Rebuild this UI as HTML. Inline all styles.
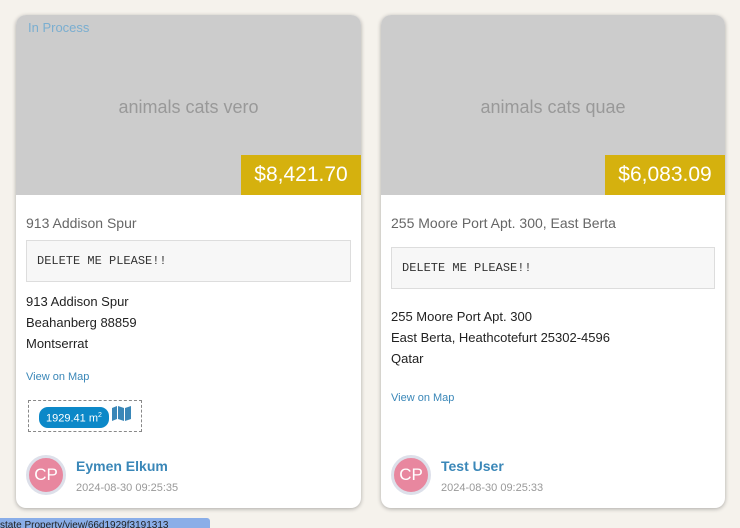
<!DOCTYPE html>
<html><head><style>
body{margin:0;width:740px;height:526px;background:#f5f2ec;font-family:"Liberation Sans",sans-serif;position:relative;overflow:hidden}
.card{position:absolute;top:15px;width:345px;height:493px;background:#fff;border-radius:10px;box-shadow:0 1px 4px rgba(0,0,0,.3);overflow:hidden}
.img{position:absolute;left:0;top:0;width:100%;height:180px;background:#cccccc}
.ph{position:absolute;top:82px;width:100%;text-align:center;color:#999;font-size:18px}
.price{position:absolute;right:0;top:140px;height:40px;width:120px;background:#d5b10e;color:#fff;font-size:21px;line-height:40px;text-align:center}
.st{position:absolute;left:12px;top:5px;color:#7aaed0;font-size:13px}
.t{position:absolute;left:10px;color:#666;font-size:14px}
.pre{position:absolute;left:10px;background:#f7f7f7;border:1px solid #ddd;font-family:"Liberation Mono",monospace;font-size:12px;line-height:40px;padding-left:10px;box-sizing:border-box;width:325px;height:42px;color:#333}
.addr{position:absolute;left:10px;font-size:13px;line-height:21px;color:#222}
.link{position:absolute;left:10px;font-size:11px;color:#3a87b8}
.av{position:absolute;left:10px;top:440px;width:34px;height:34px;border-radius:50%;background:#e8879f;border:3px solid #dde0ea;color:#fff;font-size:17px;line-height:34px;text-align:center}
.nm{position:absolute;left:60px;top:443px;color:#3a87b8;font-size:14px;font-weight:bold}
.dt{position:absolute;left:60px;top:467px;color:#999;font-size:11px}
</style></head><body>
<div class="card" style="left:16px">
<div class="img"><div class="ph">animals cats vero</div><div class="price">$8,421.70</div><div class="st">In Process</div></div>
<div class="t" style="top:200px">913 Addison Spur</div>
<div class="pre" style="top:225px">DELETE ME PLEASE!!</div>
<div class="addr" style="top:276px">913 Addison Spur<br>Beahanberg 88859<br>Montserrat</div>
<div class="link" style="top:356px">View on Map</div>
<div style="position:absolute;left:12px;top:385px;width:114px;height:32px;border:1px dashed #888;box-sizing:border-box">
<span style="position:absolute;left:10px;top:6px;background:#0c88c8;color:#fff;font-size:11px;border-radius:9px;padding:2px 7px;line-height:13px">1929.41 m<sup style="font-size:7px">2</sup></span>
<svg style="position:absolute;left:83px;top:5px" width="19" height="15" viewBox="0 0 19 15"><path d="M0 2l5-2v13l-5 2zM6 0l6 2v13l-6-2zM13 2l6-2v13l-6 2z" fill="#3a87b8"/></svg></div>
<div class="av">CP</div><div class="nm">Eymen Elkum</div><div class="dt">2024-08-30 09:25:35</div>
</div>
<div class="card" style="left:381px;width:344px">
<div class="img"><div class="ph">animals cats quae</div><div class="price">$6,083.09</div></div>
<div class="t" style="top:200px">255 Moore Port Apt. 300, East Berta</div>
<div class="pre" style="top:232px;width:324px">DELETE ME PLEASE!!</div>
<div class="addr" style="top:291px">255 Moore Port Apt. 300<br>East Berta, Heathcotefurt 25302-4596<br>Qatar</div>
<div class="link" style="top:377px">View on Map</div>
<div class="av">CP</div><div class="nm">Test User</div><div class="dt">2024-08-30 09:25:33</div>
</div>
<div style="position:absolute;left:0;top:518px;width:210px;height:10px;background:#8aaee8;border-radius:0 3px 0 0;font-size:10px;line-height:16px;color:#222;overflow:hidden;white-space:nowrap">state Property/view/66d1929f3191313</div>
</body></html>
